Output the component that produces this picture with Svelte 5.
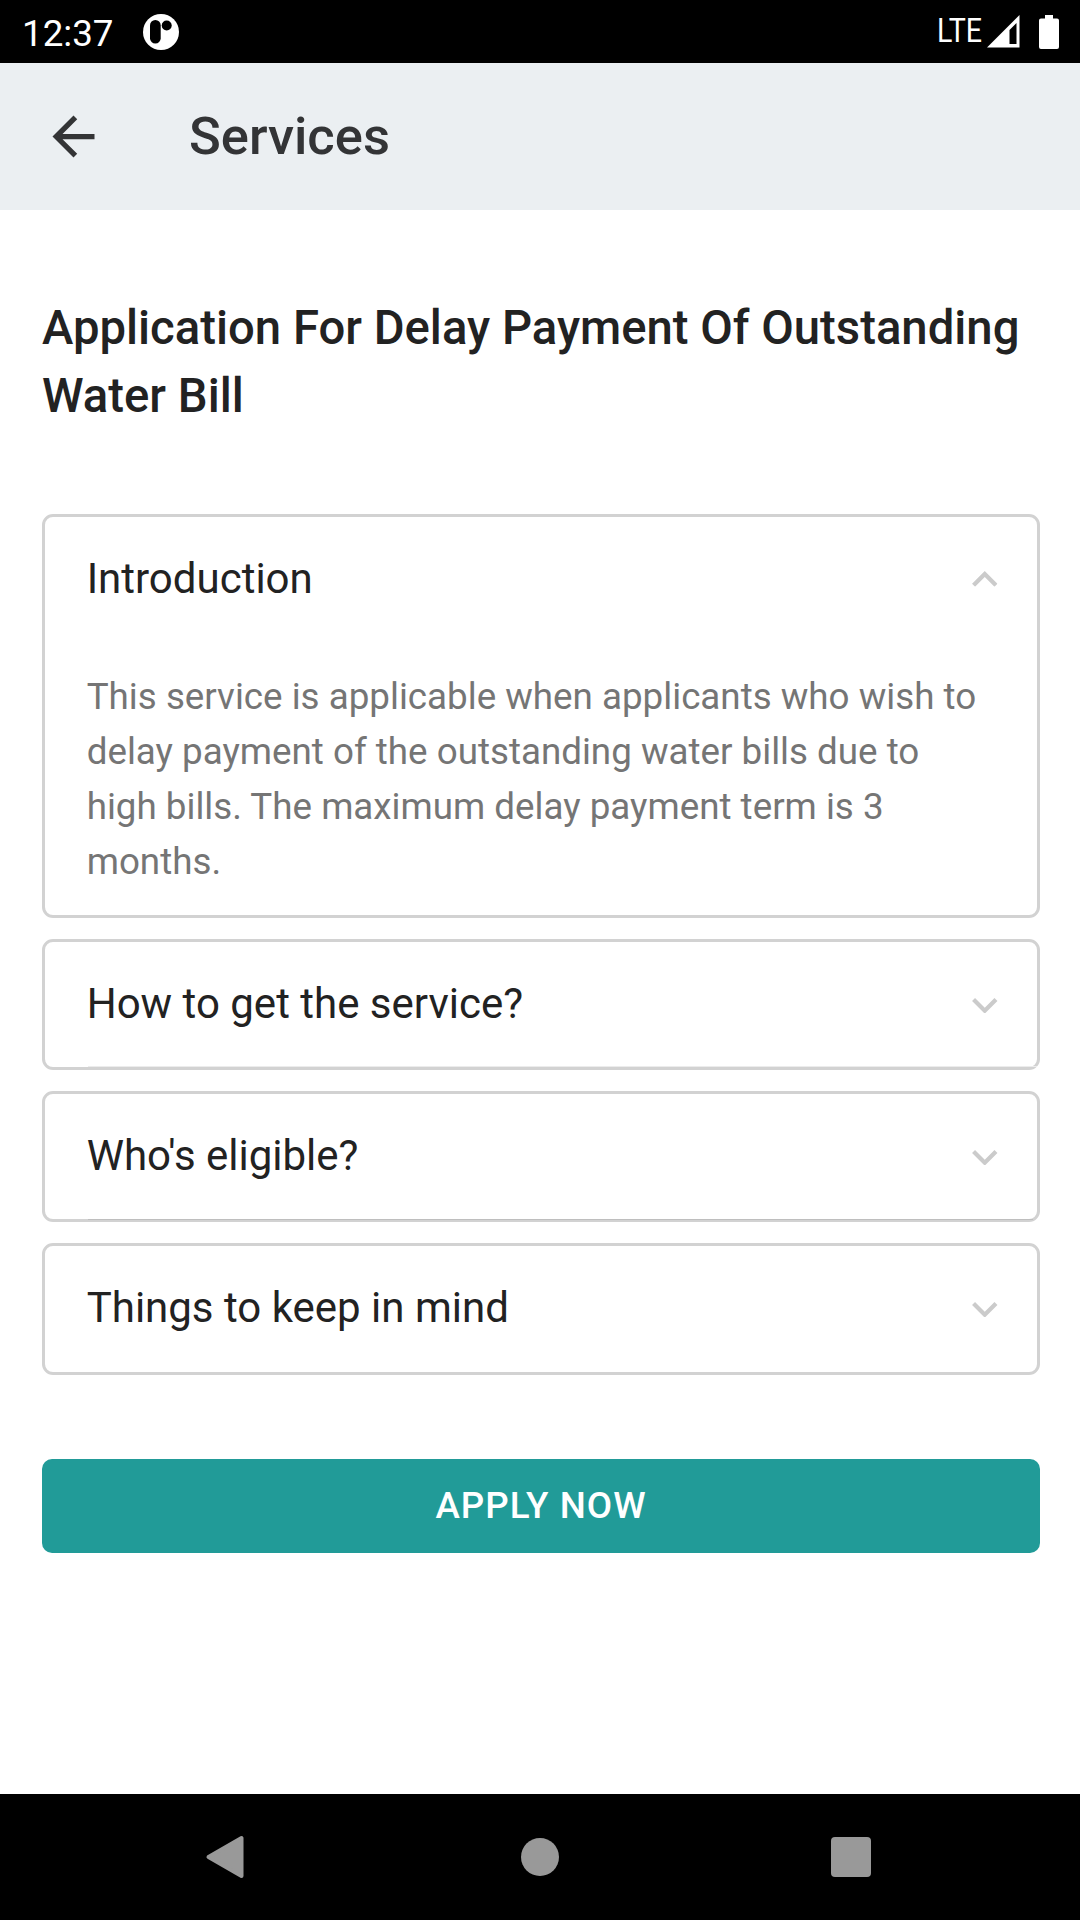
<script lang="ts">
    type Section = { title: string; body: string; open: boolean; line?: string };

    let sections: Section[] = [
        {
            title: 'Introduction',
            body: 'This service is applicable when applicants who wish to delay payment of the outstanding water bills due to high bills. The maximum delay payment term is 3 months.',
            open: true
        },
        { title: 'How to get the service?', body: '', open: false, line: 'light' },
        { title: "Who's eligible?", body: '', open: false, line: 'dark' },
        { title: 'Things to keep in mind', body: '', open: false }
    ];

    function toggle(index: number) {
        sections[index].open = !sections[index].open;
    }
</script>

<div class="screen">
    <div class="status-bar">
        <span class="clock">12:37</span>
        <svg class="app-badge" viewBox="0 0 36 36" width="36" height="36">
            <circle cx="18" cy="18" r="18" fill="#fff" />
            <rect x="7" y="6" width="10.7" height="23.6" rx="5.3" />
            <circle cx="23.7" cy="11.5" r="5" />
        </svg>
        <span class="network">LTE</span>
        <svg class="signal" viewBox="0 0 33 33" width="33" height="33">
            <path d="M0 32.500 L32.500 0 V32.500 Z" fill="#fff" />
            <path d="M22.500 15 L29.500 8 V29 H22.500 Z" />
        </svg>
        <svg class="battery" viewBox="0 0 20 34" width="20" height="34">
            <path d="M6 0h8v3.500h4a2 2 0 0 1 2 2V32a2 2 0 0 1-2 2H2a2 2 0 0 1-2-2V5.500a2 2 0 0 1 2-2h4z" fill="#fff" />
        </svg>
    </div>

    <header class="toolbar">
        <button class="back" aria-label="Back">
            <svg viewBox="0 0 24 24" width="63" height="63">
                <path d="M20 11H7.830l5.590-5.590L12 4l-8 8 8 8 1.410-1.410L7.830 13H20v-2z" fill="#333436" />
            </svg>
        </button>
        <h1>Services</h1>
    </header>

    <main>
        <h2>Application For Delay Payment Of Outstanding Water Bill</h2>

        <div class="sections">
            {#each sections as section, i}
                <section class="card {section.line ?? ''}" class:open={section.open}>
                    <button class="card-head" on:click={() => toggle(i)}>
                        <span>{section.title}</span>
                        <svg class="chevron" viewBox="6 8.300 12 7.410" width="25.5" height="15.700">
                            <path d="M7.410 8.300 12 12.880l4.590-4.580L18 9.710l-6 6-6-6z" fill="#cbcbcb" />
                        </svg>
                    </button>
                    {#if section.open}
                        <p>{section.body}</p>
                    {/if}
                </section>
            {/each}
        </div>

        <button class="apply">APPLY NOW</button>
    </main>

    <nav class="nav-bar">
        <svg viewBox="0 0 44 44" width="44" height="44">
            <path d="M4.500 22 L37.500 3 V41 Z" fill="#999" stroke="#999" stroke-width="4" stroke-linejoin="round" />
        </svg>
        <svg viewBox="0 0 44 44" width="44" height="44">
            <circle cx="22" cy="22" r="19" fill="#999" />
        </svg>
        <svg viewBox="0 0 44 44" width="44" height="44">
            <rect x="2" y="2" width="40" height="40" rx="4" fill="#999" />
        </svg>
    </nav>
</div>

<style>
    :global(body) {
        margin: 0;
        background: #fff;
    }

    .screen {
        display: flex;
        flex-direction: column;
        width: 1080px;
        height: 1920px;
        overflow: hidden;
        background: #fff;
        color: #222;
        font-family: Roboto, "Liberation Sans", sans-serif;
    }

    button {
        margin: 0;
        padding: 0;
        border: 0;
        background: none;
        color: inherit;
        font: inherit;
    }

    svg {
        display: block;
        flex: none;
    }

    .status-bar {
        display: flex;
        align-items: center;
        box-sizing: border-box;
        height: 63px;
        padding: 0 21px 0 22px;
        background: #000;
        color: #fff;
    }

    .clock {
        width: 121px;
        padding-top: 3px;
        font-size: 36.75px;
        line-height: 43px;
    }

    .network {
        margin-left: auto;
        margin-right: 5px;
        padding-bottom: 1px;
        font-size: 32.5px;
        line-height: 38px;
        transform: scaleX(0.88);
        transform-origin: right;
    }

    .battery {
        margin-left: 19px;
    }

    .toolbar {
        display: flex;
        align-items: center;
        height: 147px;
        padding-left: 42px;
        background: #ebeff2;
        color: #333436;
    }

    h1 {
        margin: 0 0 0 84px;
        padding-bottom: 2px;
        font-size: 52.5px;
        font-weight: 500;
        line-height: 62px;
    }

    main {
        flex: 1;
        padding: 84px 40px 0 42px;
    }

    h2 {
        margin: 0;
        font-size: 47.25px;
        font-weight: 500;
        line-height: 68px;
    }

    .sections {
        display: flex;
        flex-direction: column;
        gap: 21px;
        margin-top: 84px;
    }

    .card {
        position: relative;
        box-sizing: border-box;
        min-height: 131px;
        border: 3px solid #d2d2d2;
        border-radius: 11px;
    }

    .card:last-child {
        min-height: 132px;
    }

    .card.open {
        height: 404px;
    }

    .card.light::after,
    .card.dark::after {
        content: "";
        position: absolute;
        left: 43px;
        right: 0;
        bottom: 0;
        height: 1px;
        background: #ececec;
    }

    .card.dark::after {
        right: 4px;
        bottom: -1px;
        background: #bebebe;
    }

    .card-head {
        display: flex;
        align-items: center;
        justify-content: space-between;
        width: 100%;
        height: 125px;
        padding: 0 39.3px 0 41.7px;
        font-size: 42px;
        line-height: 50px;
        text-align: left;
    }

    .card-head span {
        padding-bottom: 2px;
    }

    .chevron {
        margin-top: 2px;
    }

    .open .chevron {
        margin: 0 0 1px;
        transform: rotate(180deg);
    }

    p {
        margin: 27px 42px 0 41.7px;
        color: #757575;
        font-size: 36.75px;
        line-height: 55px;
    }

    .apply {
        display: block;
        width: 100%;
        height: 94px;
        margin-top: 84px;
        padding-bottom: 2px;
        border-radius: 10px;
        background: #219b98;
        color: #fff;
        font-size: 36.75px;
        font-weight: 500;
        letter-spacing: 0.028em;
    }

    .nav-bar {
        display: flex;
        align-items: center;
        justify-content: space-between;
        box-sizing: border-box;
        height: 126px;
        padding: 0 207px 0 205px;
        background: #000;
    }

    .nav-bar svg:first-child {
        margin-left: -1px;
        margin-right: 2px;
    }
</style>
